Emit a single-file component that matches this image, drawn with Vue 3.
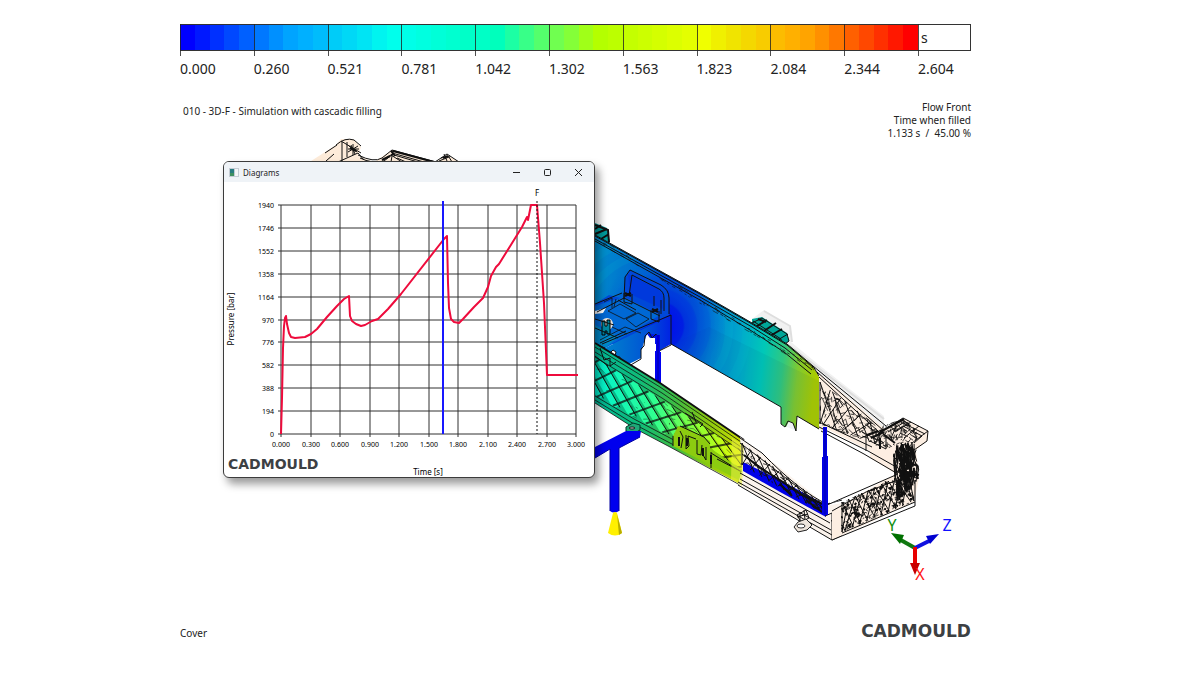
<script setup>
const bands = [
  ['0.000', '#0000ff', '#0018ff', '#0030ff', '#0048ff', '#0060ff'],
  ['0.260', '#0078ff', '#0090ff', '#00a4ff', '#00b0ff', '#00bcfc'],
  ['0.521', '#00ccf8', '#00d8f6', '#00e4f4', '#00f4f0', '#00ffec'],
  ['0.781', '#00ffe8', '#00ffe0', '#00ffd8', '#00ffd0', '#00ffc8'],
  ['1.042', '#00ffc6', '#00ffbc', '#1cffa4', '#38ff88', '#54ff6c'],
  ['1.302', '#70ff50', '#84ff38', '#a0ff18', '#b4ff00', '#bcff00'],
  ['1.563', '#c4ff00', '#ccff00', '#d4ff00', '#dcff00', '#e4ff00'],
  ['1.823', '#f0ff00', '#f0f000', '#f0e400', '#f4d800', '#f8cc00'],
  ['2.084', '#fcbc00', '#ffb000', '#ffa400', '#ff9000', '#ff7800'],
  ['2.344', '#ff6000', '#ff4800', '#ff3000', '#ff1800', '#ff0000'],
].map(([label, ...colors]) => ({ label, colors }))

const plot = { x: 57, y: 23, w: 295, h: 229 }
const xTicks = Array.from({ length: 11 }, (_, i) => ({
  x: Math.round(plot.x + (plot.w * i) / 10),
  label: (i * 0.3).toFixed(3),
}))
const yTicks = Array.from({ length: 11 }, (_, i) => ({
  y: Math.round(plot.y + (plot.h * i) / 10),
  label: String(1940 - i * 194),
}))

// Small deterministic generator, so that the mesh looks the same on every load
function random(seed) {
  let s = seed
  return () => {
    s = (s * 16807) % 2147483647
    return s / 2147483647
  }
}
// Point inside a quad given as [topLeft, topRight, bottomRight, bottomLeft]
function at(q, u, v) {
  const mix = (i) =>
    (q[0][i] * (1 - u) + q[1][i] * u) * (1 - v) + (q[3][i] * (1 - u) + q[2][i] * u) * v
  return mix(0).toFixed(1) + ' ' + mix(1).toFixed(1)
}
function mesh(q, count, size, seed) {
  const r = random(seed)
  let d = ''
  for (let i = 0; i < count; i++) {
    const u = r()
    const v = r()
    const du = (r() - 0.5) * size
    const dv = (r() - 0.5) * size * 2.5
    const c = (n) => Math.max(0, Math.min(1, n))
    d += `M${at(q, u, v)}L${at(q, c(u + du), c(v + dv))}`
    if (i % 3 === 0) d += `L${at(q, c(u + du * 2), c(v + dv * 0.3))}`
  }
  return d
}
function lattice(q, count, lean) {
  let d = ''
  for (let i = 0; i <= count; i++) {
    const a = i / count
    const b = Math.max(0, Math.min(1, a + lean))
    d += `M${at(q, a, 0)}L${at(q, b, 1)}`
  }
  return d
}
// Parallel ribs that run past the quad's ends and are cut by a clip path
function ribs(q, from, to, step, lean) {
  let d = ''
  for (let a = from; a <= to; a += step) d += `M${at(q, a, 0)}L${at(q, a + lean, 1)}`
  return d
}
const web = [[595, 357], [744, 452], [744, 477], [595, 396]]
const webBars = ribs(web, -0.3, 1, 0.11, 0.22)
const webCross = ribs(web, 0.03, 1.3, 0.11, -0.24)
const webNoise = mesh(web, 40, 0.06, 91)
const farWeb = [[820, 382], [882, 430], [875, 444], [820, 424]]
const farBars = lattice(farWeb, 5, 0.3) + lattice(farWeb, 6, -0.28)
const farNoise = mesh(farWeb, 95, 0.18, 37)
const nearWeb = [[742, 443], [826, 506], [824, 514], [742, 465]]
const nearBars = lattice(nearWeb, 11, 0.15) + lattice(nearWeb, 9, -0.12)
const nearNoise = mesh(nearWeb, 70, 0.1, 53)
const endBlock = [[842, 502], [908, 472], [914, 501], [842, 532]]
const endBars = lattice(endBlock, 10, 0.16) + lattice(endBlock, 10, -0.16)
const endNoise = mesh(endBlock, 200, 0.07, 17)
const endKnots = mesh(endBlock, 110, 0.06, 83)
const cornerNoise = mesh([[895, 446], [911, 442], [918, 479], [899, 500]], 60, 0.25, 29)
const cornerFine = mesh([[893, 444], [915, 440], [920, 479], [896, 500]], 90, 0.4, 47)
const headNoise = mesh([[870, 430], [904, 419], [924, 438], [872, 452]], 90, 0.22, 71)
const rimNoise = mesh([[600, 239], [814, 366], [814, 371], [600, 244]], 90, 0.03, 11)
</script>

<template>
  <main class="viewer">
    <header>
      <div class="scale">
        <div v-for="band in bands" :key="band.label" class="step">
          <div class="swatches">
            <span v-for="color in band.colors" :key="color" :style="{ background: color }"></span>
          </div>
          <span class="value">{{ band.label }}</span>
        </div>
        <div class="step">
          <div class="swatches unit">s</div>
          <span class="value">2.604</span>
        </div>
      </div>
      <div class="captions">
        <h1>010 - 3D-F - Simulation with cascadic filling</h1>
        <p>Flow Front<br />Time when filled<br />1.133 s &nbsp;/&nbsp; 45.00 %</p>
      </div>
    </header>

    <section class="stage">
      <svg class="model" viewBox="180 140 791 480" role="img" aria-label="Flow front model">
        <defs>
          <linearGradient id="wall" gradientUnits="userSpaceOnUse" x1="595" y1="320" x2="819" y2="345">
            <stop offset="0" stop-color="#0088cc" />
            <stop offset=".12" stop-color="#0074d0" />
            <stop offset=".31" stop-color="#0054d4" />
            <stop offset=".42" stop-color="#0060d2" />
            <stop offset=".52" stop-color="#0084d2" />
            <stop offset=".65" stop-color="#00a8cc" />
            <stop offset=".76" stop-color="#00c8b8" />
            <stop offset=".85" stop-color="#30c880" />
            <stop offset=".92" stop-color="#80ca30" />
            <stop offset="1" stop-color="#aacc00" />
          </linearGradient>
          <radialGradient id="gate" gradientUnits="userSpaceOnUse" cx="660" cy="326" r="66">
            <stop offset="0" stop-color="#0008f0" />
            <stop offset=".35" stop-color="#0018e4" stop-opacity=".9" />
            <stop offset=".38" stop-color="#0028e0" stop-opacity=".8" />
            <stop offset=".55" stop-color="#0030e0" stop-opacity=".65" />
            <stop offset=".58" stop-color="#0038dc" stop-opacity=".5" />
            <stop offset=".76" stop-color="#0040dc" stop-opacity=".35" />
            <stop offset=".78" stop-color="#0048d8" stop-opacity=".25" />
            <stop offset="1" stop-color="#0060d8" stop-opacity="0" />
          </radialGradient>
          <linearGradient id="beam" gradientUnits="userSpaceOnUse" x1="595" y1="0" x2="744" y2="0">
            <stop offset="0" stop-color="#00b898" />
            <stop offset=".3" stop-color="#10bc78" />
            <stop offset=".55" stop-color="#40bc40" />
            <stop offset=".75" stop-color="#88c810" />
            <stop offset="1" stop-color="#d0e000" />
          </linearGradient>
          <linearGradient id="bars" gradientUnits="userSpaceOnUse" x1="595" y1="0" x2="744" y2="0">
            <stop offset="0" stop-color="#00f0d0" />
            <stop offset=".4" stop-color="#30ff90" />
            <stop offset=".7" stop-color="#90ff30" />
            <stop offset="1" stop-color="#f0f800" />
          </linearGradient>
          <linearGradient id="plate" gradientUnits="userSpaceOnUse" x1="600" y1="0" x2="672" y2="0">
            <stop offset="0" stop-color="#0088cc" />
            <stop offset=".6" stop-color="#0058d4" />
            <stop offset="1" stop-color="#0020e4" />
          </linearGradient>
          <clipPath id="webClip"><path d="M595 357L744 452V477L595 396z" /></clipPath>
          <clipPath id="wallClip"><path d="M595 235L700 293 752 323V388L671 344H595z" /></clipPath>
        </defs>

        <!-- part of the frame behind the window -->
        <path d="M308 163L336 145 341 139H353L361 147 358 156 374 162 392 150 436 162 447 155 460 162z" fill="#fdebd9" />
        <g class="edge">
          <path d="M336 145Q345 137 354 140L361 146M341 141L361 153M342 142V161M347 142V157M325 153L337 145M326 161L334 154M338 162L358 153 364 160M358 155Q374 163 382 158L392 150M360 158Q372 164 384 161L393 154" />
          <path d="M392 150L436 162M392 153L424 162M391 155L402 162M393 150L391 162M435 162L447 154 459 162M439 161L449 157 452 162" />
          <path d="M349 146L357 152M351 145L355 154M348 152L358 146M348 149H359M353 144V155M394 155L418 162M397 158L406 162M386 158L394 153M441 158L450 156M444 154L447 161" />
          <path class="heavy" d="M350 148L356 151M391 151L395 156M443 158L448 156M382 160L390 156M393 151L434 162" />
        </g>

        <!-- far wall -->
        <path d="M752 319L764 310 790 327 791 342 819 365 884 416 884 432 819 377z" fill="#f1f1f1" />
        <path d="M764 311L790 326 792 342M790 346L884 419" class="soft" />
        <path d="M595 223L607 228 610 243 595 236z" fill="#009c9c" />
        <path class="edge heavy" d="M595 225L608 230 609 242M595 234L607 229M595 229L601 225M601 239L609 234" />
        <path d="M752 325V319L762 317 787 333 789 341 781 347z" fill="#00a698" />
        <path class="edge" d="M752 323L762 318 787 334 789 341 781 347M753 321L781 339V347M776 341L788 334" />
        <path class="edge heavy" d="M757 326L767 320M764 331L776 323M770 336L782 329M758 319L766 322" />
        <path d="M595 235L700 293 752 323 787 344 813 366 819 377V429L797 416 796 431 793 423 789 421 786 427 781 424V407L671 344H595z" fill="url(#wall)" />
        <path d="M709 327L819 381V429L797 416 796 431 781 424V407L671 344z" fill="#002060" opacity=".06" />
        <g clip-path="url(#wallClip)">
          <circle cx="660" cy="326" r="66" fill="url(#gate)" />
          <g fill="none" stroke="#00d0d0" opacity=".1">
            <circle cx="655" cy="328" r="74" stroke-width="8" />
            <circle cx="655" cy="328" r="92" stroke-width="9" />
          </g>
        </g>
        <g class="edge">
          <path d="M595 235L700 293 752 323 787 344 813 366 819 376" />
          <path d="M595 236L700 294 752 324 787 345 813 367M595 239L700 297 752 327 785 348 812 370M595 241L700 300 750 330 784 352 811 374" />
          <path :d="rimNoise" opacity=".6" />
          <path d="M671 344L781 407V424L785 427 788 421 793 423 796 431 797 416 819 429" />
        </g>

        <!-- clip housing -->
        <path d="M624 299L625 277 630 270 661 285Q669 290 669 298V315L605 348 595 344V304L609 295z" fill="#0048d8" />
        <path d="M628 274L658 289Q663 292 663 298V309L630 294z" fill="#0030e0" opacity=".6" />
        <path d="M595 306L624 297 660 315 605 348 595 343z" fill="#0068d4" />
        <path d="M595 325L618 337 605 348 595 344z" fill="#0088c8" />
        <path d="M605 348L671 315V344L659 351 657 335 647 333 644 347 641 350 641 358 629 364 617 373 595 350z" fill="url(#plate)" />
        <path d="M655 347V338H650L647 334 643 345 641 361 629 367 658 383z" fill="#fff" />
        <circle cx="607" cy="324" r="6" fill="#e8e2dc" />
        <path d="M595 311L606 308 603 313 595 314z" fill="#fff" />
        <path d="M602 321H605V326H607V320H610V334H607V331H605V335H602z" fill="#0088a0" stroke="#000" />
        <path d="M609 354L613 350 616 352 615 356 620 357 621 363 609 361z" fill="#fff" />
        <g class="edge">
          <path d="M624 299L625 277 630 270 661 285Q669 290 669 298V314M629 296L632 275 659 289Q664 292 664 298V311M595 304L622 293M597 312L624 298 660 316M602 344L671 315V345L659 351M595 328L618 338M605 348L595 344M617 373L641 359 641 349 644 346 645 336 649 332 652 338 656 334 659 350M595 319L614 325" />
          <path d="M608 311L620 304 636 313 624 319zM626 319L638 313 649 319 636 327zM612 327L627 334M600 340L625 327 641 333M604 302L612 298V308M614 307L616 299" opacity=".8" />
          <path d="M624 293V302L632 304V294M651 310V319L659 322V311M600 343L626 331" />
          <path class="heavy" d="M625 293L631 296M625 296L631 293M652 309L658 312M652 312L658 309" />
          <path d="M654 306V296M661 314V300M618 300L636 310M609 354L613 350 616 352 615 356 620 357V363" />
        </g>
        <path d="M656 335H660V352H661V386H655V351H656z" fill="#0000f0" />
        <path d="M658 335V384" stroke="#0000a0" />

        <!-- near beam -->
        <path d="M595 343L660 383 744 440V486L670 447 634 428 595 403z" fill="url(#beam)" />
        <g clip-path="url(#webClip)">
          <path :d="webBars" stroke="url(#bars)" stroke-width="6" fill="none" />
          <path :d="webBars" class="edge" transform="translate(4 0)" />
          <path :d="webCross" class="edge heavy" opacity=".75" />
          <path :d="webNoise" class="edge" opacity=".4" />
        </g>
        <g class="edge">
          <path class="heavy" d="M595 343L660 383 744 440" />
          <path d="M595 347L660 387 744 444M595 352L662 393 744 449M595 357L662 398 744 453M595 396L634 419 670 438 740 474M595 400L634 424 670 443 740 479M595 403L634 428 670 447 740 485" opacity=".8" />
          <path d="M595 356L608 366M600 348L604 360 610 358 610 366 616 362M685 413L703 424 700 427M692 412L696 422" />
        </g>
        <path d="M673 436L678 426 689 429 710 441V448L744 471V483L712 466 673 446z" fill="#8ccc10" />
        <g class="edge">
          <path d="M673 436V446M680 426L704 437 710 444M680 431L683 437 681 448M686 435V449L689 446 688 436 696 439M697 440L697 454L701 455 702 445M706 447V460L703 455M711 452V468M711 453L740 471M717 459L742 472" />
          <path class="heavy" d="M679 437V446M687 438V446M703 448V456M711 455V464" />
        </g>
        <path d="M626 427L633 423 640 425 640 430 633 434 626 431z" fill="#20a878" stroke="#003828" />
        <ellipse cx="632" cy="428" rx="3" ry="1" fill="#fff" stroke="#111" />

        <!-- unfilled run of the near beam -->
        <path d="M740 437L760 452 820 500 831 505 842 503V532L832 540 738 484 742 470z" fill="#fbf3ec" />
        <path d="M732 438L744 445 742 486 731 479z" fill="#e8ef40" opacity=".6" />
        <path d="M743 462L780 480 826 505V517L780 492 743 471z" fill="#0000e8" />
        <g class="edge">
          <path d="M740 438L762 453Q800 492 827 504L842 500M740 443L760 458 818 503M742 454L785 484 824 508M740 473L830 523M740 479L831 530M738 482L832 535M738 485L832 540 842 535M832 540V513L825 516M832 513L842 508M831 521L842 517M832 529L842 525" />
          <path :d="nearBars" />
          <path :d="nearNoise" opacity=".75" />
          <path class="heavy" d="M744 455L760 468 780 480 800 494 825 505M780 484L792 496M806 500L822 512" />
          <path d="M797 515L806 510 809 518 801 522zM800 512V521M797 517L808 514M804 510L805 520" />
        </g>
        <path d="M798 522L806 519 812 525 807 530 798 532 794 527z" fill="#eee5dc" class="outlined" />
        <ellipse cx="801" cy="526" rx="4" ry="2" fill="#fff" stroke="#333" />

        <!-- far rail and end block -->
        <path d="M819 373L885 429 904 418 928 431 927 441 916 450 919 478 914 502 832 540 832 511 897 473 896 466 870 453 819 429z" fill="#fceee2" />
        <path d="M825 428L870 451 896 466V474L840 500 830 504V443z" fill="#fff" />
        <path d="M871 443L899 441 898 475 870 458z" fill="#fdeee2" />
        <g class="edge">
          <path d="M813 366L886 426M817 372L884 431M819 377L880 433M819 427L868 451 898 468M819 422L872 447M821 431L864 454 898 474M827 505L866 488 898 474M832 511L866 492 903 478M842 533L915 502M832 540L915 506V480" />
          <path :d="farBars" />
          <path :d="farNoise" opacity=".75" />
          <path d="M884 430L903 418 928 431 927 441 914 450M888 432L903 423 925 434M895 431L903 426 922 436 914 443M904 420V427M911 422L895 432M919 426L904 438M928 431L912 443V450M897 425L891 438M866 434V451M870 441L886 449V437M862 432L884 443" />
          <path :d="headNoise" opacity=".8" />
          <path class="heavy" d="M880 432L904 419M883 434L895 443M867 435L878 431M871 438L884 432M880 438V449M899 448L915 456M901 460L918 466M898 470L919 475M904 450V478" />
          <path :d="endBars" />
          <path :d="endNoise" opacity=".8" />
          <path :d="endKnots" class="heavy" />
          <path :d="cornerFine" />
          <path :d="cornerNoise" class="heavy" />
        </g>
        <path d="M823 427H827V456H828V515H822V457H823z" fill="#0000e4" />
        <path d="M825 428V514" stroke="#0000a8" />

        <!-- runner, sprue and nozzle -->
        <path d="M595 447L626 431 641 431 640 437 619 448V511Q614 514 610 511V449L595 458z" fill="#0000ee" />
        <path d="M595 458L610 449V511M619 511V448L640 437" fill="none" stroke="#0000a0" />
        <path d="M613 513Q615 511 617 513L622 533Q615 538 608 533z" fill="#fff000" />
        <path d="M617 514L622 533 619 535z" fill="#b8ac00" />

        <!-- axis triad -->
        <g class="axes">
          <path d="M915 548L899 539" stroke="#107810" stroke-width="4" />
          <path d="M891 533L904 535 900 544z" fill="#007000" />
          <path d="M915 548L931 540" stroke="#1010e0" stroke-width="4" />
          <path d="M939 534L930 544 926 536z" fill="#0000d0" />
          <path d="M915 547V566" stroke="#e80000" stroke-width="4" />
          <path d="M910 563H920L915 575z" fill="#c80000" />
          <text x="892" y="531" fill="#109010">Y</text>
          <text x="947" y="531" fill="#1010ff">Z</text>
          <text x="920" y="580" fill="#ff1010">X</text>
        </g>
      </svg>

      <section class="window" aria-label="Diagrams">
        <div class="titlebar">
          <svg class="app-icon" viewBox="0 0 10 9" aria-hidden="true">
            <path d="M0 0H10V9H0z" fill="#c4ccd4" />
            <path d="M1 1H5V8H1z" fill="#287c80" />
            <path d="M1 5H5V8H1z" fill="#409060" />
            <path d="M6 1H9V8H6z" fill="#f4f6f8" />
          </svg>
          <h2>Diagrams</h2>
          <button type="button" aria-label="Minimize">
            <svg viewBox="0 0 9 9"><path d="M1 4.500H8" /></svg>
          </button>
          <button type="button" aria-label="Maximize">
            <svg viewBox="0 0 9 9"><rect x="1.500" y="1.500" width="6" height="6" rx="1" /></svg>
          </button>
          <button type="button" aria-label="Close">
            <svg viewBox="0 0 9 9"><path d="M1 1L8 8M8 1L1 8" /></svg>
          </button>
        </div>
        <svg class="chart" viewBox="0 0 370 295" role="img" aria-label="Pressure over time">
          <g class="grid">
            <path v-for="t in xTicks" :key="t.label" :d="`M${t.x} 23V255`" />
            <path v-for="t in yTicks" :key="t.label" :d="`M54 ${t.y}H352`" />
          </g>
          <g class="ticks">
            <text v-for="t in yTicks" :key="t.label" x="50" :y="t.y + 3" text-anchor="end">{{ t.label }}</text>
            <text v-for="t in xTicks" :key="t.label" :x="t.x" y="265" text-anchor="middle">{{ t.label }}</text>
            <text class="axis" x="313" y="14" text-anchor="middle">F</text>
          </g>
          <path class="curve" d="M57 252L58 216 59 166 60 144 61 136 62 134 63 142 65 151 67 155 71 156 81 155 87 152 93 147 103 135 113 124 120 117 125 114 126 134 128 139 132 142 137 144 141 143 148 139 154 137 164 127 177 112 220 57 223 54 224 101 225 126 227 137 230 140 235 141 239 137 250 125 259 116 264 105 267 94 272 85 275 82 298 45 303 35 304 38 307 23H313L316 61 320 121 323 193H354" />
          <path d="M219 19V252" class="cursor" />
          <path d="M313 19V252" class="fill-mark" />
          <text class="axis" x="204" y="293" text-anchor="middle">Time [s]</text>
          <text class="axis" transform="rotate(-90 10 137)" x="10" y="137" text-anchor="middle">Pressure [bar]</text>
          <text class="wordmark" x="4" y="287">CADMOULD</text>
        </svg>
      </section>
    </section>

    <footer>
      <span>Cover</span>
      <strong>CADMOULD</strong>
    </footer>
  </main>
</template>

<style>
body {
  background: #fff;
}
</style>

<style scoped>
.viewer {
  padding: 24px 229px 24px 180px;
  color: #222;
  font: 10px/13px "Noto Sans", "Open Sans", sans-serif;
}
.scale {
  display: grid;
  grid-template-columns: repeat(10, 1fr) 53px;
}
.step {
  position: relative;
}
.step::before {
  content: "";
  position: absolute;
  left: 0;
  top: 0;
  width: 1px;
  height: 32px;
  background: #222;
  opacity: 0.8;
}
.swatches {
  display: flex;
  height: 27px;
  box-sizing: border-box;
  border: solid #333;
  border-width: 1px 0;
}
.swatches span {
  flex: 1;
}
.unit {
  align-items: center;
  padding-left: 3px;
  border-right-width: 1px;
  font-size: 14px;
}
.value {
  display: block;
  padding-top: 8px;
  font-size: 14px;
  line-height: 20px;
}
.captions {
  display: flex;
  justify-content: space-between;
  padding-top: 22px;
}
h1,
h2,
p {
  margin: 0;
  font-size: 10px;
  font-weight: 400;
}
h1 {
  padding: 4px 0 0 3px;
}
p {
  text-align: right;
}
.stage {
  position: relative;
}
.model {
  display: block;
  width: 100%;
  overflow: visible;
}
.edge {
  fill: none;
  stroke: #101010;
  stroke-width: 1;
}
.heavy {
  stroke-width: 2;
}
.soft {
  fill: none;
  stroke: #dedede;
  stroke-width: 2;
}
.outlined {
  stroke: #222;
}
.axes text {
  font-size: 16px;
  text-anchor: middle;
}
.window {
  position: absolute;
  left: 43px;
  top: 21px;
  width: 370px;
  border: 1px solid #3c3c3c;
  border-radius: 6px;
  background: #fff;
  box-shadow: 4px 6px 8px rgba(0, 0, 0, 0.4);
  overflow: hidden;
}
.titlebar {
  display: flex;
  align-items: center;
  height: 20px;
  padding-left: 5px;
  background: #eff3f7;
}
.app-icon {
  width: 10px;
  margin-right: 4px;
}
h2 {
  flex: 1;
  font-size: 8px;
}
button {
  width: 31px;
  height: 20px;
  padding: 0;
  border: 0;
  background: none;
}
button svg {
  display: block;
  width: 9px;
  margin: auto;
  fill: none;
  stroke: #222;
}
.chart {
  display: block;
  width: 100%;
}
.grid {
  stroke: #303030;
  stroke-width: 1;
}
.ticks {
  font-size: 7px;
}
.axis {
  font-size: 8px;
}
.curve {
  fill: none;
  stroke: #ee0b3c;
  stroke-width: 2;
  stroke-linejoin: round;
}
.cursor {
  stroke: #1818ff;
  stroke-width: 2;
}
.fill-mark {
  stroke: #111;
  stroke-dasharray: 2 2;
}
.wordmark,
strong {
  fill: #3c4043;
  color: #3c4043;
  font-family: "DejaVu Sans", sans-serif;
  font-weight: 700;
}
.wordmark {
  font-size: 14px;
}
footer {
  display: flex;
  justify-content: space-between;
  align-items: center;
}
footer span {
  padding-top: 4px;
}
strong {
  font-size: 17px;
  line-height: 22px;
}
</style>
